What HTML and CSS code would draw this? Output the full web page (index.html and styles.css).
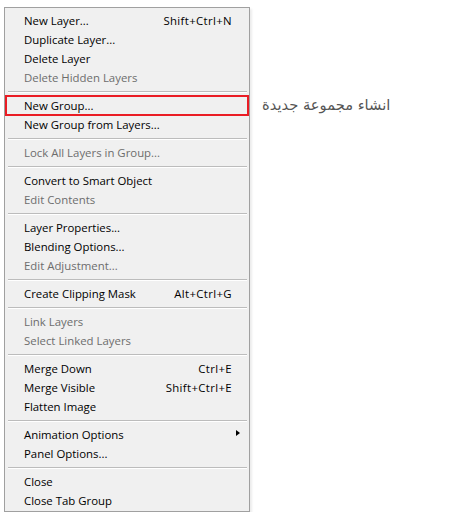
FILE: index.html
```html
<!DOCTYPE html>
<html>
<head>
    <title>Layers Menu</title>
    <link rel="stylesheet" href="styles.css">
</head>
<body>
    <div class="page">
        <div class="menu">
            <div class="item"><span>New Layer...</span><span class="key">Shift+Ctrl+N</span></div>
            <div class="item"><span>Duplicate Layer...</span></div>
            <div class="item"><span>Delete Layer</span></div>
            <div class="item off"><span>Delete Hidden Layers</span></div>
            <div class="sep"></div>
            <div class="item marked"><span>New Group...</span></div>
            <div class="item"><span>New Group from Layers...</span></div>
            <div class="sep"></div>
            <div class="item off"><span>Lock All Layers in Group...</span></div>
            <div class="sep"></div>
            <div class="item"><span>Convert to Smart Object</span></div>
            <div class="item off"><span>Edit Contents</span></div>
            <div class="sep"></div>
            <div class="item"><span>Layer Properties...</span></div>
            <div class="item"><span>Blending Options...</span></div>
            <div class="item off"><span>Edit Adjustment...</span></div>
            <div class="sep"></div>
            <div class="item"><span>Create Clipping Mask</span><span class="key">Alt+Ctrl+G</span></div>
            <div class="sep"></div>
            <div class="item off"><span>Link Layers</span></div>
            <div class="item off"><span>Select Linked Layers</span></div>
            <div class="sep"></div>
            <div class="item"><span>Merge Down</span><span class="key">Ctrl+E</span></div>
            <div class="item"><span>Merge Visible</span><span class="key">Shift+Ctrl+E</span></div>
            <div class="item"><span>Flatten Image</span></div>
            <div class="sep"></div>
            <div class="item"><span>Animation Options</span><span class="arrow"></span></div>
            <div class="item"><span>Panel Options...</span></div>
            <div class="sep"></div>
            <div class="item"><span>Close</span></div>
            <div class="item"><span>Close Tab Group</span></div>
        </div>
        <div class="note" dir="rtl">انشاء مجموعة جديدة</div>
    </div>
</body>
</html>
```

FILE: styles.css
```css
body {
    margin: 0;
    background-color: #fff;
    font-family: "Open Sans", "DejaVu Sans", sans-serif;
}
.page {
    display: flex;
    align-items: flex-start;
    padding: 7px 0 0 4px;
}
.menu {
    width: 244px;
    background-color: #f0f0f0;
    border: 1px solid #a0a0a0;
    padding: 3px 0 1px;
    box-shadow: 2px 2px 2px rgba(0, 0, 0, 0.08);
}
.item {
    display: flex;
    justify-content: space-between;
    align-items: center;
    height: 19px;
    padding: 0 17px 0 19px;
    font-size: 11.4px;
    color: #000;
    white-space: nowrap;
}
.item.off {
    color: #6d6d6d;
}
.item.marked {
    outline: 2px solid #ea1c24;
    outline-offset: -1px;
    margin: 0 1px 0 1px;
    padding-left: 18px;
}
.key {
    letter-spacing: 0.35px;
}
.arrow {
    width: 0;
    height: 0;
    border-top: 3.5px solid transparent;
    border-bottom: 3.5px solid transparent;
    border-left: 4px solid #000;
    margin-right: -8px;
    margin-top: -4px;
}
.sep {
    height: 1px;
    background-color: #bcbcbc;
    border-bottom: 1px solid #fff;
    margin: 4px 2px 3px 3px;
}
.note {
    margin: 89px 0 0 12px;
    font-family: "DejaVu Sans", sans-serif;
    font-size: 14.7px;
    color: #555;
}
```
